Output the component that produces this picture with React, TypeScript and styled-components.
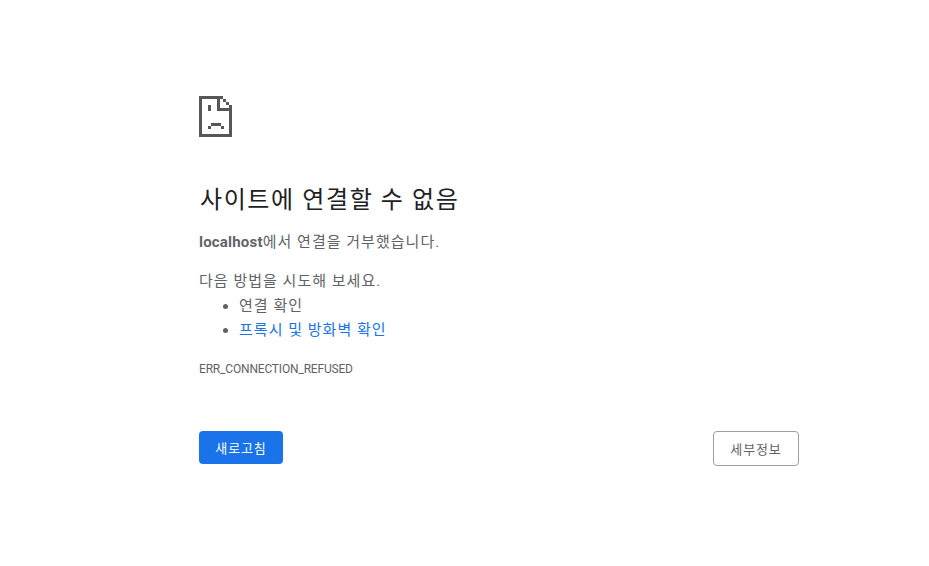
import React from "react";
import styled, { createGlobalStyle } from "styled-components";

const Global = createGlobalStyle`
  html, body { margin: 0; padding: 0; background: #fff; }
`;
const Page = styled.div`
  width: 929px;
  height: 566px;
  box-sizing: border-box;
  padding: 96px 130px 0 199px;
  color: #5f6368;
  font-family: "Roboto", "Noto Sans CJK KR", sans-serif;
  font-size: 15px;
  line-height: 24px;
  letter-spacing: 1.02px;
`;
const Main = styled.div`
  width: 600px;
`;
const Heading = styled.h1`
  margin: 44px 0 0 1px;
  font-size: 24px;
  font-weight: 400;
  line-height: 36px;
  color: #202124;
  letter-spacing: 1.6px;
`;
const Summary = styled.p`
  margin: 12px 0 0;
`;
const Host = styled.b`
  letter-spacing: 0.2px;
`;
const Suggest = styled.p`
  margin: 15px 0 0;
`;
const List = styled.ul`
  margin: 1px 0 0;
  padding-left: 40px;
`;
const Link = styled.span`
  color: #1a73e8;
`;
const Code = styled.div`
  margin-top: 17px;
  font-size: 12px;
  line-height: 20px;
  letter-spacing: -0.18px;
`;
const Buttons = styled.div`
  margin-top: 52px;
  display: flex;
  justify-content: space-between;
  align-items: flex-start;
`;
const Reload = styled.button`
  width: 84px;
  height: 33px;
  border: 0;
  border-radius: 4px;
  background: #1a73e8;
  color: #fff;
  font: 13px "Roboto", "Noto Sans CJK KR", sans-serif;
  letter-spacing: 0.9px;
  padding: 0;
`;
const Details = styled.button`
  width: 86px;
  height: 35px;
  border: 1px solid #9aa0a6;
  border-radius: 4px;
  background: #fff;
  color: #5f6368;
  font: 13px "Roboto", "Noto Sans CJK KR", sans-serif;
  letter-spacing: 0.9px;
  padding: 0;
`;
const Icon = styled.svg`
  display: block;
`;

export default function App() {
  return (
    <Page>
      <Global />
      <Main>
        <Icon width="33" height="42" viewBox="0 0 33 42" shapeRendering="crispEdges" fill="#575757">
          <path d="M0 0h24v3H3v35h27V9h3v32H0zM18 3h3v9h12v3H18zM24 3h3v3h-3zM27 6h3v3h-3z" />
          <path d="M9 9h3v6H9zM12 27h10v3H12zM9 30h3v3H9zM22 30h3v3h-3z" />
        </Icon>
        <Heading>사이트에 연결할 수 없음</Heading>
        <Summary><Host>localhost</Host>에서 연결을 거부했습니다.</Summary>
        <Suggest>다음 방법을 시도해 보세요.</Suggest>
        <List>
          <li>연결 확인</li>
          <li><Link>프록시 및 방화벽 확인</Link></li>
        </List>
        <Code>ERR_CONNECTION_REFUSED</Code>
        <Buttons>
          <Reload>새로고침</Reload>
          <Details>세부정보</Details>
        </Buttons>
      </Main>
    </Page>
  );
}
